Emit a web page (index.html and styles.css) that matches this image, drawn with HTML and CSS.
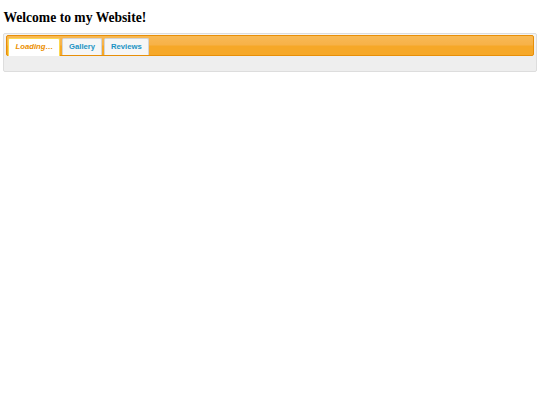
FILE: index.html
```html
<!DOCTYPE html>
<html>
<head>
<meta charset="utf-8">
<link rel="stylesheet" href="styles.css">
</head>
<body>
<h1 class="title">Welcome to my Website!</h1>
<div class="tabs">
  <ul class="tabs-nav">
    <li class="tab tab-active"><a class="tab-link" href="#p1"><span><em>Loading…</em></span></a></li>
    <li class="tab"><a class="tab-link" href="#p2"><span>Gallery</span></a></li>
    <li class="tab"><a class="tab-link" href="#p3"><span>Reviews</span></a></li>
  </ul>
  <div class="tabs-panel" id="p1"></div>
</div>
</body>
</html>
```
FILE: styles.css
```css
html, body { background: #fff; }
body {
  margin: 3.4px;
  font-family: "Liberation Serif", "Times New Roman", serif;
}
.title {
  font-size: 13.6px;
  font-weight: bold;
  margin: 7px 0 7px;
  color: #000;
}
.tabs {
  font-family: "Liberation Sans", Arial, sans-serif;
  font-size: 7.7px;
  padding: 1px 1.5px 1.5px;
  border: 1px solid #dddddd;
  border-radius: 2px;
  background: #eeeeee;
  background-image: linear-gradient(#f4f4f4, #eeeeee 60%);
}
.tabs-nav {
  list-style: none;
  margin: 0;
  padding: 1.5px 1.5px 0;
  display: flex;
  border: 1px solid #e78f08;
  border-radius: 2px;
  background: #f6a828;
  background-image: linear-gradient(#f8b955 0%, #f7b248 45%, #f6a828 55%, #f6a828 100%);
}
.tab {
  margin: 0.5px 1.5px 0 0;
  border: 1px solid #d4d4d4;
  border-bottom: 0;
  border-radius: 2px 2px 0 0;
  background: #f6f6f6;
  display: flex;
}
.tab-active {
  background: #ffffff;
  border-color: #fbd850;
  margin-bottom: -1px;
  padding-bottom: 1px;
}
.tab-link {
  display: block;
  padding: 3.4px 6.2px 3px;
  text-decoration: none;
  font-weight: bold;
  color: #1c94c4;
  line-height: 1.15;
}
.tab-active .tab-link { color: #eb8f00; }
.tabs-panel {
  padding: 7px 10.4px;
}
```
